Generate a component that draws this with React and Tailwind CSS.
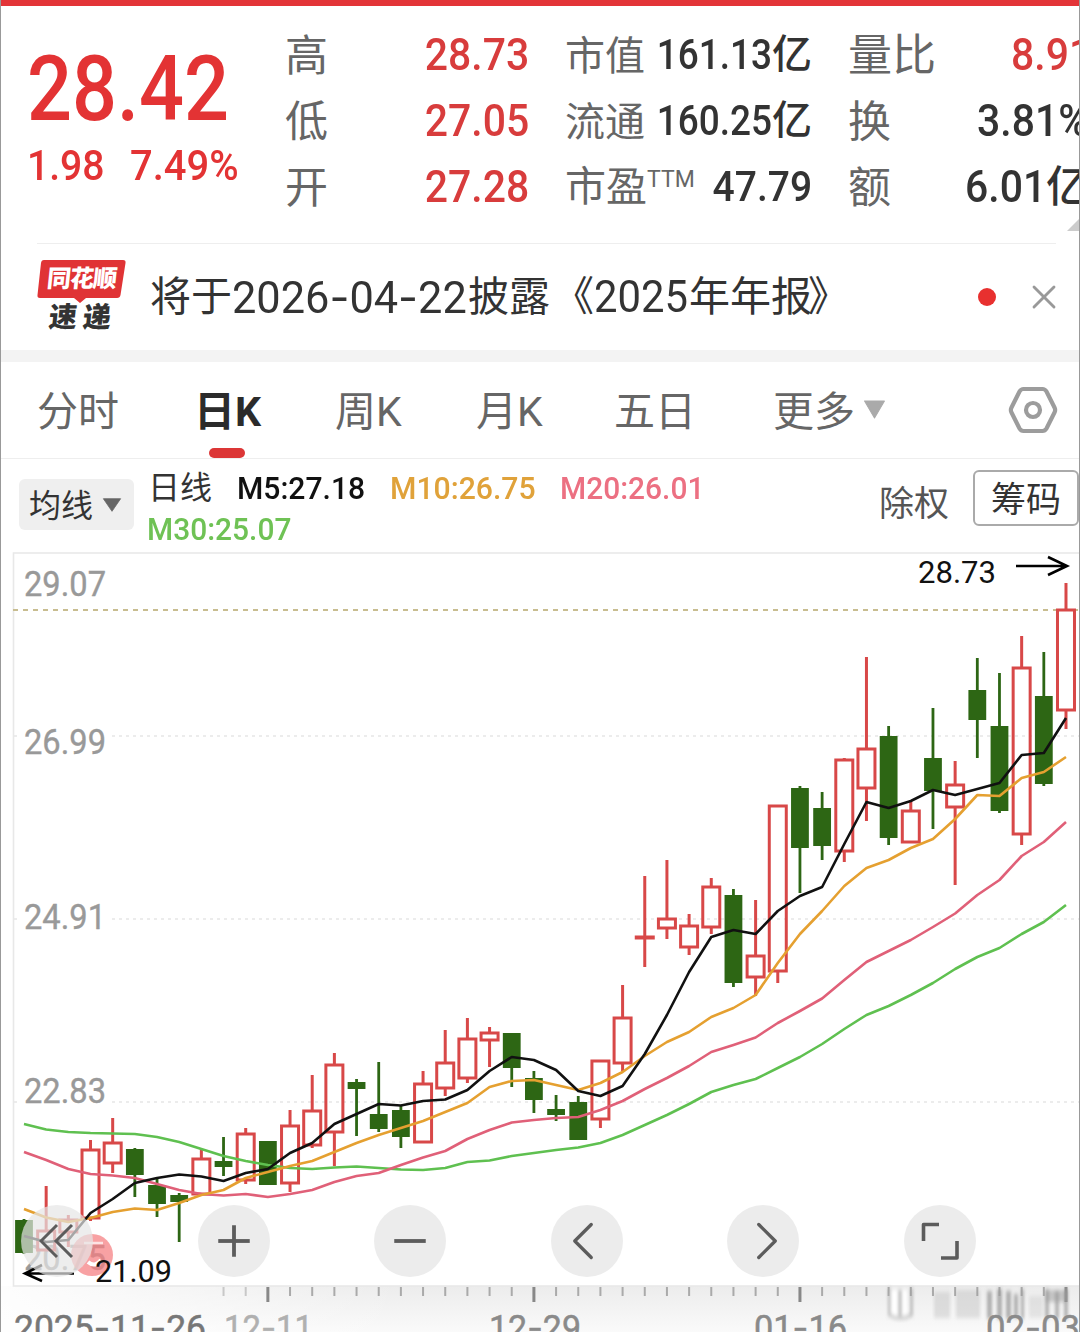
import { ChevronLeft, ChevronRight, Minus, Plus, X } from 'lucide-react';

// [direction, high, bodyTop, bodyBottom, low] in chart pixels
const candles = [
  ['d', 1219, 1220, 1253, 1254], ['u', 1186, 1231, 1250, 1250], ['u', 1215, 1220, 1232, 1247],
  ['u', 1140, 1150, 1218, 1221], ['u', 1118, 1143, 1163, 1173], ['d', 1148, 1149, 1175, 1197],
  ['d', 1178, 1185, 1204, 1217], ['d', 1193, 1195, 1202, 1242], ['u', 1149, 1159, 1194, 1194],
  ['d', 1137, 1161, 1167, 1176], ['u', 1128, 1134, 1180, 1184], ['d', 1141, 1141, 1185, 1185],
  ['u', 1110, 1126, 1183, 1192], ['u', 1075, 1111, 1145, 1148], ['u', 1053, 1065, 1132, 1166],
  ['d', 1079, 1082, 1089, 1136], ['d', 1062, 1114, 1129, 1132], ['d', 1106, 1110, 1137, 1148],
  ['u', 1071, 1084, 1142, 1142], ['u', 1030, 1063, 1088, 1096], ['u', 1018, 1039, 1078, 1083],
  ['u', 1027, 1033, 1040, 1067], ['d', 1033, 1033, 1068, 1087], ['d', 1071, 1078, 1100, 1113],
  ['d', 1095, 1109, 1115, 1121], ['d', 1096, 1102, 1140, 1140], ['u', 1061, 1061, 1119, 1128],
  ['u', 985, 1018, 1063, 1071], ['u', 876, 937, 938, 967], ['u', 860, 919, 928, 939],
  ['u', 914, 926, 947, 955], ['u', 878, 887, 927, 934], ['d', 889, 895, 983, 987],
  ['u', 900, 956, 977, 996], ['u', 806, 806, 971, 983], ['d', 786, 788, 848, 893],
  ['d', 792, 808, 846, 860], ['u', 758, 760, 851, 862], ['u', 657, 749, 788, 821],
  ['d', 726, 736, 838, 845], ['u', 800, 811, 842, 842], ['d', 708, 758, 791, 829],
  ['u', 761, 785, 807, 885], ['d', 658, 690, 720, 758], ['d', 673, 726, 811, 813],
  ['u', 636, 668, 834, 845], ['d', 652, 696, 784, 786], ['u', 583, 610, 710, 729],
];

const averages = [
  {
    color: '#5fc050',
    values: [1124, 1129.5, 1132, 1133, 1133.5, 1134, 1137, 1142, 1149, 1156, 1161, 1165, 1168, 1169, 1167.5, 1166.5, 1168, 1169.5, 1170, 1168, 1162, 1160.5, 1156, 1153, 1150, 1147.5, 1143, 1135, 1125, 1115, 1104, 1092, 1085, 1079, 1068, 1057, 1044, 1029, 1015, 1006, 995, 983, 969, 957, 948, 934, 922, 905],
  },
  {
    color: '#e06078',
    values: [1152, 1160, 1169, 1174, 1175.5, 1178, 1184, 1190, 1194, 1195.5, 1194, 1197, 1194, 1190, 1182, 1176, 1173, 1165, 1157.5, 1151, 1139, 1130, 1122.5, 1120, 1118, 1117, 1110, 1101, 1089, 1078, 1066, 1052, 1045, 1037.5, 1023, 1011, 998.5, 980, 962, 951, 940, 927, 913.5, 895, 880, 856, 842, 822],
  },
  {
    color: '#e5a030',
    values: [1209, 1217.5, 1222, 1218, 1212, 1208.5, 1210, 1203, 1195, 1190, 1178, 1172, 1166, 1161, 1152, 1143, 1135, 1128, 1121, 1112, 1103, 1087, 1081, 1080, 1085, 1090, 1083, 1072, 1056, 1042, 1032, 1017, 1008, 995, 963, 934, 911, 886, 868, 860, 848, 839, 819, 795, 796, 778, 772, 757],
  },
  {
    color: '#111111',
    values: [1236, 1242, 1240, 1213, 1199, 1183, 1178, 1174.5, 1176.5, 1181, 1173, 1169, 1153, 1143, 1124, 1114, 1104, 1105.5, 1101, 1099.5, 1090, 1071, 1057, 1060, 1070, 1091, 1096, 1086, 1054, 1015, 972, 937, 930, 934, 911, 896, 887, 844, 802, 808, 801, 790, 795, 789, 783, 755, 753, 718],
  },
];

const priceLabels = [
  ['29.07', 596], ['26.99', 754], ['24.91', 929], ['22.83', 1103],
];

const dateLabels = [
  { parts: ['2025', '11', '26'], x: 14, width: 192, color: '#777' },
  { parts: ['12', '11'], x: 224, width: 89, color: '#b0b0b0' },
  { parts: ['12', '29'], x: 489, width: 92, color: '#8a8a8a' },
  { parts: ['01', '16'], x: 754, width: 93, color: '#8a8a8a' },
  { parts: ['02', '03'], x: 986, width: 94, color: '#8a8a8a' },
];

const candleX = (i) => 24 + i * 22.17;

function Caret({ className }) {
  return (
    <svg className={className} viewBox="0 0 22 20" preserveAspectRatio="none">
      <path d="M1.5 1h19L11 19z" fill="currentColor" stroke="currentColor" strokeLinejoin="round" />
    </svg>
  );
}

function Candle({ x, data }) {
  const [dir, high, top, bottom, low] = data;
  if (dir === 'd') {
    return (
      <g fill="#2d6614">
        <rect x={x - 1.4} y={high} width="2.8" height={low - high} />
        <rect x={x - 8.9} y={top} width="17.8" height={bottom - top} />
      </g>
    );
  }
  return (
    <g stroke="#d84848" strokeWidth="3" fill="none">
      <path d={`M${x} ${high}V${top}M${x} ${bottom}V${low}`} />
      <rect x={x - 8.5} y={top} width="17" height={bottom - top} />
    </g>
  );
}

function Quote() {
  return (
    <div className="flex h-[237px] shrink-0 pt-4 text-[#333]">
      <div className="w-[284px] shrink-0 pl-[26px] text-[#e33334]">
        <div className="mt-[23px] h-[90px] origin-left scale-x-[0.88] text-[90px] leading-[90px] font-medium whitespace-nowrap">28.42</div>
        <div className="flex h-[60px] text-[43px] leading-[60px] font-medium">
          <span className="w-[103px] origin-left scale-x-[0.91] whitespace-nowrap">1.98</span>
          <span className="origin-left scale-x-[0.93] whitespace-nowrap">7.49%</span>
        </div>
      </div>

      <div className="flex w-[244px] shrink-0 flex-col text-[44px] leading-[66px] text-[#d83c3c]">
        {[['高', '28.73'], ['低', '27.05'], ['开', '27.28']].map(([label, value]) => (
          <div key={label} className="flex h-[66px] justify-between">
            <span className="text-[43px] leading-[69px] text-[#666]">{label}</span>
            <span className="origin-right scale-x-[0.93] font-medium">{value}</span>
          </div>
        ))}
      </div>

      <div className="ml-[36px] flex w-[247px] shrink-0 flex-col text-[42px] leading-[66px]">
        {[['市值', '161.13'], ['流通', '160.25']].map(([label, value]) => (
          <div key={label} className="flex h-[66px] justify-between">
            <span className="text-[40px] leading-[69px] text-[#666]">{label}</span>
            <span className="flex font-medium">
              <span className="-ml-5 origin-right scale-x-[0.88]">{value}</span>
              <span className="text-[40px]">亿</span>
            </span>
          </div>
        ))}
        <div className="flex h-[66px] justify-between">
          <span className="flex text-[41px] leading-[67px] text-[#666]">
            市盈
            <span className="-mt-2 text-[23px]">TTM</span>
          </span>
          <span className="origin-right scale-x-[0.93] font-medium">47.79</span>
        </div>
      </div>

      <div className="relative ml-[36px] flex min-w-0 flex-1 flex-col overflow-hidden text-[44px] leading-[66px]">
        <div className="flex h-[66px] whitespace-nowrap">
          <span className="w-[163px] shrink-0 leading-[68px] text-[#666]">量比</span>
          <span className="origin-left scale-x-[0.93] font-medium text-[#d83c3c]">8.91</span>
        </div>
        <div className="flex h-[66px] whitespace-nowrap">
          <span className="w-[129px] shrink-0 text-[43px] leading-[69px] text-[#666]">换</span>
          <span className="origin-left scale-x-[0.93] font-medium">3.81%</span>
        </div>
        <div className="flex h-[66px] whitespace-nowrap">
          <span className="w-[117px] shrink-0 text-[43px] leading-[68px] text-[#666]">额</span>
          <span className="w-[81px] shrink-0 origin-left scale-x-[0.93] font-medium">6.01</span>
          <span className="text-[43px] font-medium">亿</span>
        </div>
        <svg className="absolute right-0 bottom-[12px] h-3 w-3" viewBox="0 0 12 12">
          <path d="M12 0v12H0z" fill="#ccc" />
        </svg>
      </div>
    </div>
  );
}

function News() {
  return (
    <div className="mr-[23px] ml-[36px] flex h-[107px] shrink-0 items-center border-t border-[#eeeeee]">
      <div className="relative h-[76px] w-[90px] shrink-0">
        <svg className="absolute inset-0 h-full w-full" viewBox="0 0 90 76">
          <path d="M7 1h79q3 0 2.500 3l-5 32q-.5 3-3.500 3H49l-6 5-6-5H3q-3 0-2.500-3L4 4q.4-3 3-3z" fill="#e03335" />
        </svg>
        <div className="relative flex h-full flex-col items-center font-black">
          <span className="mt-[7px] -ml-[2px] text-[24px] leading-[26px] tracking-[-1px] text-white">
            <span className="inline-block -skew-x-6">同花顺</span>
          </span>
          <span className="mt-[10px] ml-[2px] text-[28px] leading-[32px] tracking-[6px] text-[#333]">
            <span className="inline-block -skew-x-6">速递</span>
          </span>
        </div>
      </div>

      <div className="ml-[23px] flex text-[41px] leading-[62px] whitespace-nowrap text-[#333]">
        <span>将于</span>
        <span className="w-[236px] text-[44px]">
          <span className="inline-block origin-left scale-x-[0.985]">
            2026<span className="font-[Inter]">-</span>04<span className="font-[Inter]">-</span>22
          </span>
        </span>
        <span>披露</span>
        <span className="ml-[3px]">《</span>
        <span className="w-[95px] origin-left scale-x-[0.95] text-[44px]">2025</span>
        <span>年年报</span>
        <span className="-ml-[4px]">》</span>
      </div>

      <div className="ml-auto h-[18px] w-[18px] rounded-full bg-[#e8302f]" />
      <X className="-mr-[8px] ml-[28px] h-[40px] w-[40px] text-[#999]" strokeWidth={1.7} />
    </div>
  );
}

function Tabs() {
  return (
    <div className="flex h-[97px] shrink-0 border-b border-[#eeeeee] text-[41px] leading-[100px] whitespace-nowrap text-[#666]">
      <span className="ml-[36px] w-[157px]">分时</span>
      <div className="relative w-[141px] font-bold text-[#2b2b2b]">
        日K
        <div className="absolute bottom-0 left-[15px] h-[10px] w-[36px] rounded-full bg-[#dc3636]" />
      </div>
      <span className="w-[141px]">周K</span>
      <span className="w-[138px]">月K</span>
      <span className="w-[159px]">五日</span>
      <span>更多</span>
      <Caret className="mt-[38px] ml-[8px] h-[19px] w-[23px] text-[#aaa]" />
      <svg className="mt-[23px] mr-[21px] ml-auto h-[50px] w-[50px]" viewBox="0 0 50 50" fill="none" stroke="#9c9c9c" strokeWidth="4.200">
        <path d="M15.500 4h19q2.500 0 4 2.500l8 16q1.300 2.500 0 5l-8 16q-1.500 2.500-4 2.500h-19q-2.500 0-4-2.500l-8-16q-1.300-2.500 0-5l8-16q1.500-2.500 4-2.500z" />
        <circle cx="25" cy="25" r="7" />
      </svg>
    </div>
  );
}

function Indicators() {
  return (
    <div className="flex h-[93px] shrink-0 whitespace-nowrap">
      <div className="mt-[20px] ml-[18px] flex h-[51px] w-[115px] shrink-0 items-center rounded-md bg-[#efefef] pl-[10px] text-[32px] leading-[51px] text-[#333]">
        <span className="mt-1">均线</span>
        <Caret className="ml-[9px] h-[14px] w-[20px] text-[#666]" />
      </div>
      <div className="mt-[9px] ml-[14px] w-[700px] text-[32px] leading-[41px] font-medium">
        <div className="flex h-[41px]">
          <span className="w-[89px] font-normal text-[#333]">日线</span>
          <span className="w-[153px] origin-left scale-x-[0.94] text-[#111]">M5:27.18</span>
          <span className="w-[170px] origin-left scale-x-[0.943] text-[#e0a23a]">M10:26.75</span>
          <span className="origin-left scale-x-[0.935] text-[#ec7082]">M20:26.01</span>
        </div>
        <div className="-ml-px origin-left scale-x-[0.935] text-[#6fc255]">M30:25.07</div>
      </div>
      <span className="mt-[20px] ml-[31px] w-[94px] text-[35px] leading-[51px] text-[#555]">除权</span>
      <div className="mt-[11px] flex h-[56px] w-[106px] shrink-0 items-center justify-center rounded-md border-2 border-[#aaa] text-[35px] leading-[52px] text-[#333]">
        <span className="mt-[5px]">筹码</span>
      </div>
    </div>
  );
}

function RoundButton({ children, className = 'bg-[#ececec]' }) {
  return (
    <button className={`flex h-[72px] w-[72px] items-center justify-center rounded-full text-[#5c5c5c] ${className}`}>
      {children}
    </button>
  );
}

function Chart() {
  return (
    <div className="relative h-[780px] shrink-0">
      <svg className="-ml-px block h-[780px] w-[1080px]" viewBox="0 552 1080 780" fontFamily="Roboto, sans-serif">
        <defs>
          <linearGradient id="axis" x1="0" y1="0" x2="0" y2="1">
            <stop offset="0" stopColor="#ececec" />
            <stop offset="1" stopColor="#fafafa" />
          </linearGradient>
          <linearGradient id="fade" x1="0" y1="0" x2="1" y2="0">
            <stop offset="0" stopColor="#fff" stopOpacity="0.9" />
            <stop offset="1" stopColor="#fff" stopOpacity="0" />
          </linearGradient>
          <filter id="soft">
            <feGaussianBlur stdDeviation="1.800 2" />
          </filter>
        </defs>

        <rect x="1" y="1286" width="1078" height="46" fill="url(#axis)" />
        <rect x="1" y="1286" width="400" height="46" fill="url(#fade)" />
        <path d="M1079 553H13.500V1286H1079" fill="none" stroke="#e8e8e8" strokeWidth="1.600" />
        <path d="M14 736H1079M14 919H1079M14 1102H1079" stroke="#e6e6e6" strokeWidth="1.500" strokeDasharray="3 4" />
        <path d="M13 610H1079" stroke="#c8bd90" strokeWidth="2" strokeDasharray="5 5" />

        {priceLabels.map(([label, y]) => (
          <g key={label}>
            <rect x="20" y={y - 28} width="88" height="31" fill="#fff" />
            <text x="24" y={y} fontSize="35" fill="#999" stroke="#999" strokeWidth="0.400" textLength="82" lengthAdjust="spacingAndGlyphs">{label}</text>
          </g>
        ))}
        <text x="24" y="1270" fontSize="35" fill="#999" stroke="#999" strokeWidth="0.400" textLength="82" lengthAdjust="spacingAndGlyphs">20.75</text>

        {candles.map((data, i) => <Candle key={i} x={candleX(i)} data={data} />)}
        {averages.map(({ color, values }) => (
          <polyline
            key={color}
            points={values.map((y, i) => `${candleX(i)},${y}`).join(' ')}
            fill="none"
            stroke={color}
            strokeWidth="2.600"
            strokeLinejoin="round"
          />
        ))}

        <text x="918" y="583" fontSize="32" fill="#111" textLength="78" lengthAdjust="spacingAndGlyphs">28.73</text>
        <path d="M1016 566H1066M1048 557L1067 566L1048 575" fill="none" stroke="#000" strokeWidth="2.600" />

        <circle cx="92" cy="1255" r="21" fill="#f57d80" opacity="0.72" />
        <path d="M84 1243h19" fill="none" stroke="#fff" strokeWidth="2.500" opacity="0.7" />
        <path d="M88 1262q7 6 13-2" fill="none" stroke="#fff" strokeWidth="4" />
        <text x="95" y="1282" fontSize="32" fill="#111" textLength="77" lengthAdjust="spacingAndGlyphs">21.09</text>
        <path d="M74 1273.500H25M42 1265L25 1273.500L42 1281" fill="none" stroke="#000" strokeWidth="2.600" />

        {candles.map((_, i) => {
          if (i < 9) return null;
          const major = (i - 11) % 12 === 0;
          return (
            <rect
              key={i}
              x={candleX(i) - (major ? 1.5 : 1)}
              y="1287"
              width={major ? 3 : 2}
              height={major ? 15 : 9}
              fill={major ? '#888' : '#aaa'}
              opacity={i < 12 && !major ? 0.6 : 1}
            />
          );
        })}

        <g filter="url(#soft)" fill="#999">
          <path d="M891 1290h16v28h-16z" fill="#fff" />
          <path d="M888 1288h3v26q8 5 19 0v-26h3v28q-13 7-25 0zM898 1290h4v26h-4z" opacity="0.6" />
          <path d="M934 1292h16v26h-16zM956 1290h24v28h-24z" opacity="0.25" />
          <path d="M987 1291h5v28h-5zM997 1289h5v30h-5zM1006 1291h5v28h-5zM1014 1294h4v24h-4zM1021 1289h3v30h-3z" opacity="0.75" />
          <path d="M1029 1296h14v22h-14z" opacity="0.2" />
          <path d="M1045 1289h4v30h-4zM1055 1291h4v28h-4zM1064 1289h4v30h-4z" opacity="0.7" />
          <path d="M1045 1290h23v12h-23z" opacity="0.5" />
        </g>

        {dateLabels.map(({ parts, x, width, color }) => (
          <text key={x} x={x} y="1340" fontSize="35" fill={color} stroke={color} strokeWidth="0.500" textLength={width} lengthAdjust="spacingAndGlyphs">
            {parts.map((part, i) => (
              <tspan key={i}>
                {i > 0 && <tspan fontFamily="Inter">-</tspan>}
                {part}
              </tspan>
            ))}
          </text>
        ))}
      </svg>

      <div className="absolute top-[653px] left-[20px] flex gap-[104.5px]">
        <RoundButton className="bg-[#e6e6e6]/70">
          <svg className="h-[36px] w-[36px]" viewBox="0 0 36 36" fill="none" stroke="currentColor" strokeWidth="3">
            <path d="M18 2L2 18l16 16M33 2L17 18l16 16" />
          </svg>
        </RoundButton>
        <RoundButton><Plus className="h-[54px] w-[54px]" strokeWidth={1.7} strokeLinecap="butt" /></RoundButton>
        <RoundButton><Minus className="h-[54px] w-[54px]" strokeWidth={1.7} strokeLinecap="butt" /></RoundButton>
        <RoundButton><ChevronLeft className="-ml-[7px] h-[66px] w-[66px] shrink-0" strokeWidth={1.2} /></RoundButton>
        <RoundButton><ChevronRight className="ml-[7px] h-[66px] w-[66px] shrink-0" strokeWidth={1.2} /></RoundButton>
        <RoundButton>
          <svg className="h-[38px] w-[38px]" viewBox="0 0 38 38" fill="none" stroke="currentColor" strokeWidth="3.600" strokeLinejoin="round">
            <path d="M2.500 19V2.500H18M36 19V36H20" />
          </svg>
        </RoundButton>
      </div>
    </div>
  );
}

export default function App() {
  return (
    <div className="flex h-[1332px] w-[1080px] flex-col overflow-hidden border-x border-[#999] bg-white font-['Roboto','Noto_Sans_CJK_SC',sans-serif]">
      <div className="h-[6px] shrink-0 bg-[#e33438]" />
      <Quote />
      <News />
      <div className="h-[12px] shrink-0 bg-[#f3f3f3]" />
      <Tabs />
      <Indicators />
      <Chart />
    </div>
  );
}
